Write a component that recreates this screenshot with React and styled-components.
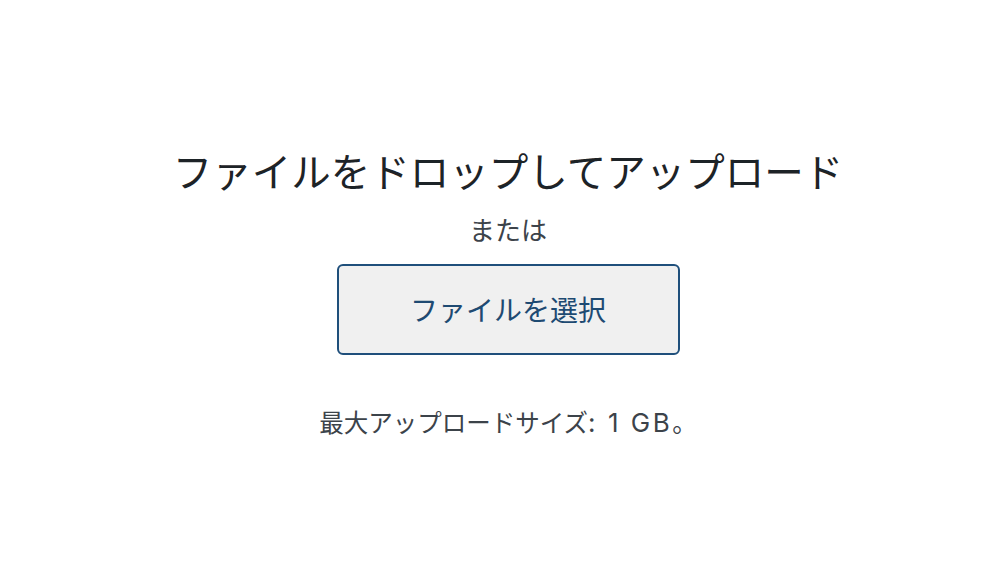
import React from "react";
import styled, { createGlobalStyle } from "styled-components";

const Global = createGlobalStyle`
  html, body { margin: 0; padding: 0; background: #fff; }
  body { font-family: "Noto Sans CJK JP", "Noto Sans", sans-serif; }
`;

const Page = styled.div`
  width: 1004px;
  height: 578px;
  display: flex;
  flex-direction: column;
  align-items: center;
  padding: 150px 0 0 12px;
  box-sizing: border-box;
`;

const Title = styled.h2`
  margin: 0;
  font-size: 39.5px;
  line-height: 1;
  font-weight: 400;
  color: #1d2327;
`;

const Or = styled.p`
  margin: 26px 0 0;
  font-size: 26px;
  line-height: 1;
  color: #3c434a;
`;

const SelectButton = styled.button`
  margin-top: 22px;
  width: 343px;
  height: 91px;
  border: 2px solid #1f4f7b;
  border-radius: 6px;
  background: #f0f0f0;
  color: #1e4a72;
  font-family: inherit;
  font-size: 28px;
  cursor: pointer;
`;

const MaxSize = styled.p`
  margin: 55px 0 0;
  font-size: 24.5px;
  line-height: 1;
  color: #3c434a;
`;

const Latin = styled.span`
  font-family: Inter, "Noto Sans CJK JP", sans-serif;
  font-size: 26px;
  letter-spacing: 2.5px;
`;

export default function App() {
  return (
    <>
      <Global />
      <Page>
        <Title>ファイルをドロップしてアップロード</Title>
        <Or>または</Or>
        <SelectButton>ファイルを選択</SelectButton>
        <MaxSize>
          最大アップロードサイズ<Latin>: 1 GB</Latin>。
        </MaxSize>
      </Page>
    </>
  );
}
